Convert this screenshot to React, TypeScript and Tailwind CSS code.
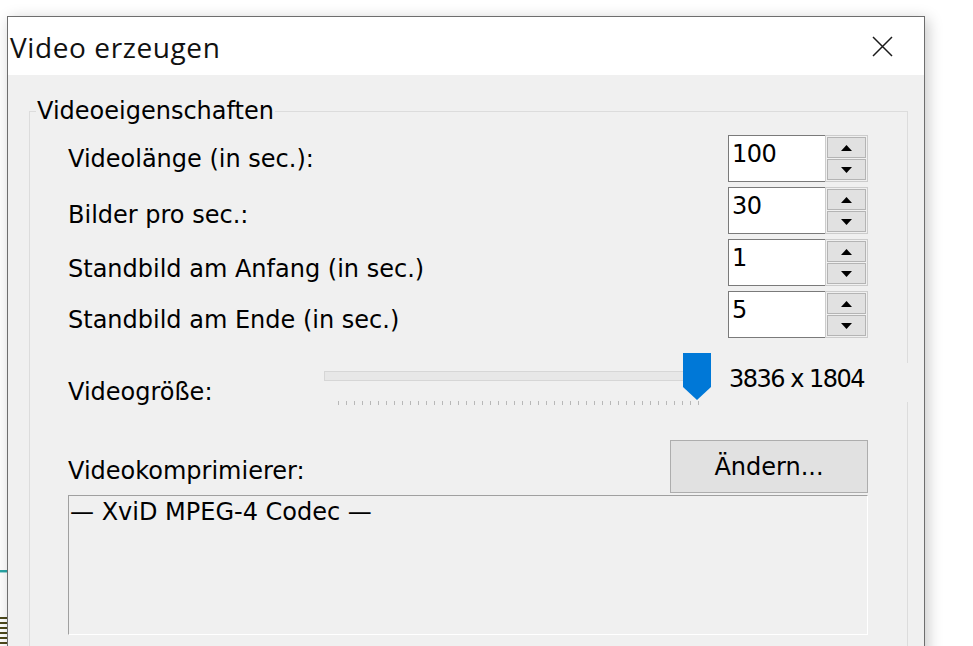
import React from 'react';

// Zeilen der Videoeigenschaften (Label leicht versetzt wie im Original)
const rows = [
  { label: 'Videolänge (in sec.):', value: '100', shift: 'mt-0' },
  { label: 'Bilder pro sec.:', value: '30', shift: 'mt-[9px]' },
  { label: 'Standbild am Anfang (in sec.)', value: '1', shift: 'mt-[13px]' },
  { label: 'Standbild am Ende (in sec.)', value: '5', shift: 'mt-[10px]' },
];

const Arrow = ({ up }: { up: boolean }) => (
  <svg width="11" height="6" viewBox="0 0 11 6">
    <path d={up ? 'M0 6 L5.5 0 L11 6 Z' : 'M0 0 L11 0 L5.5 6 Z'} fill="#000" />
  </svg>
);

const SpinBox = ({ value }: { value: string }) => (
  <div className="flex h-[47px] shrink-0">
    <div className="w-[97px] h-full bg-white border border-r-0 border-[#7a7a7a] pl-[3px] pt-[4px] text-[24px] leading-[28px] tracking-[-0.5px]">
      {value}
    </div>
    <div className="w-[43px] h-full border border-[#cccccc] p-px flex flex-col gap-px">
      <div className="flex-1 bg-[#e1e1e1] border border-[#b4b4b4] flex items-center justify-center">
        <Arrow up />
      </div>
      <div className="flex-1 bg-[#e1e1e1] border border-[#b4b4b4] flex items-center justify-center">
        <Arrow up={false} />
      </div>
    </div>
  </div>
);

const Slider = () => (
  <svg width="392" height="56" viewBox="0 0 392 56" className="shrink-0">
    <rect x="2.5" y="21.5" width="386" height="9" fill="#e7e7e7" stroke="#d6d6d6" />
    {Array.from({ length: 46 }, (_, i) => (
      <rect key={i} x={16 + i * 8} y="51" width="1" height="4" fill="#b8b8b8" />
    ))}
    <path d="M361 3 H389 V37 L375 50 L361 37 Z" fill="#0078d7" />
  </svg>
);

const App: React.FC = () => {
  return (
    <div className="w-[973px] h-[646px] bg-white overflow-hidden flex text-black font-['DejaVu_Sans',sans-serif]">
      {/* Reste des Hintergrundfensters links */}
      <div className="w-[7px] shrink-0 flex flex-col">
        <div className="mt-[570px] h-[2px] bg-[#2aa6a6]" />
        <div className="h-[1px] bg-[#9fd8d8]" />
        <div className="mt-[44px] h-[30px] bg-[repeating-linear-gradient(180deg,#4d4a1c_0px,#4d4a1c_2px,#ffffff_2px,#ffffff_5px)]" />
      </div>

      <div className="mt-[16px] w-[918px] h-[700px] shrink-0 border border-[#6e6e6e] bg-[#f0f0f0] shadow-[3px_3px_14px_rgba(0,0,0,0.22)] flex flex-col">
        <div className="h-[58px] bg-white flex items-center justify-between pl-[2px] pr-[31px] shrink-0">
          <span className="text-[28px] tracking-[0.6px] font-['Open_Sans',sans-serif] text-[#111] mt-[2px]">Video erzeugen</span>
          <svg width="21" height="21" viewBox="0 0 21 21">
            <path d="M1 1 L20 20 M20 1 L1 20" stroke="#1a1a1a" strokeWidth="1.5" />
          </svg>
        </div>

        <div className="pl-[21px] pt-[22px]">
          <fieldset className="w-[879px] min-w-0 border border-[#dcdcdc] px-0">
            <legend className="ml-[6px] px-[1px] text-[24px] leading-[28px]">Videoeigenschaften</legend>
            <div className="pl-[38px] pr-[39px] pt-[10px] pb-[40px] flex flex-col text-[24px] leading-[28px]">
              <div className="flex flex-col gap-[5px]">
                {rows.map((r) => (
                  <div key={r.label} className="flex items-center justify-between h-[47px]">
                    <span className={r.shift}>{r.label}</span>
                    <SpinBox value={r.value} />
                  </div>
                ))}
              </div>

              <div className="flex items-start mt-[12px]">
                <span className="w-[254px] shrink-0 mt-[28px]">Videogröße:</span>
                <Slider />
                <span className="ml-[15px] mt-[13px] w-[182px] h-[39px] shrink-0 pt-[2px] bg-[#f0f0f0] tracking-[-1.5px]">3836 x 1804</span>
              </div>

              <div className="flex items-start justify-between mt-[34px]">
                <span className="mt-[17px]">Videokomprimierer:</span>
                <button className="w-[198px] h-[53px] bg-[#e1e1e1] border border-[#adadad] flex items-center justify-center">
                  Ändern...
                </button>
              </div>

              <div className="mt-[2px] h-[140px] border border-t-[#a0a0a0] border-l-[#a0a0a0] border-r-white border-b-white pl-[1px] pt-[2px]">
                — XviD MPEG-4 Codec —
              </div>
            </div>
          </fieldset>
        </div>
      </div>
    </div>
  );
};

export default App;
